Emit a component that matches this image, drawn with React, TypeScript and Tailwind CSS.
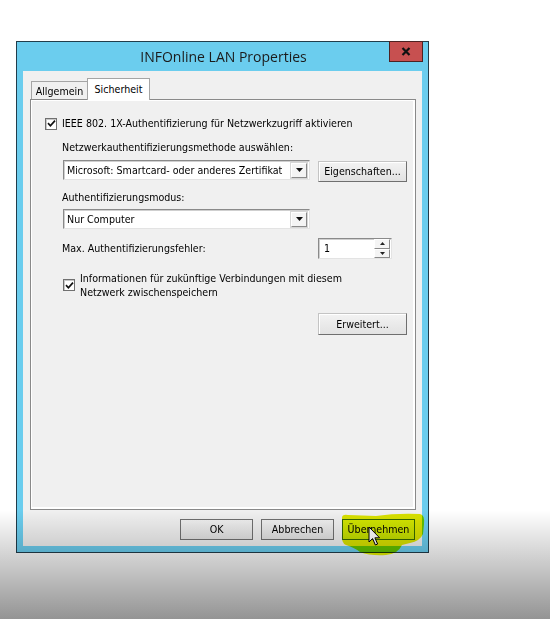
import React from 'react';

function CheckMark() {
  return (
    <svg viewBox="0 0 9 9" className="w-[9px] h-[9px]">
      <path d="M1 4.2 L3.4 6.8 L8 1.6" fill="none" stroke="#111" strokeWidth="1.7" />
    </svg>
  );
}

function CheckBox() {
  return (
    <div className="w-[12px] h-[12px] shrink-0 bg-white border border-[#707070] shadow-[inset_1px_1px_0_#c8c8c8] flex items-center justify-center">
      <CheckMark />
    </div>
  );
}

function ArrowDown({ small }: { small?: boolean }) {
  return small ? (
    <svg viewBox="0 0 5 3" className="w-[5px] h-[3px]">
      <polygon points="0,0 5,0 2.5,3" fill="#222" />
    </svg>
  ) : (
    <svg viewBox="0 0 7 4" className="w-[7px] h-[4px]">
      <polygon points="0,0 7,0 3.5,4" fill="#111" />
    </svg>
  );
}

function ArrowUp() {
  return (
    <svg viewBox="0 0 5 3" className="w-[5px] h-[3px]">
      <polygon points="0,3 5,3 2.5,0" fill="#222" />
    </svg>
  );
}

function Select({ value, width }: { value: string; width: string }) {
  return (
    <div
      className={`${width} h-[20px] bg-white border border-[#8a8a8a] border-r-[#e3e3e3] border-b-[#e3e3e3] shadow-[inset_1px_1px_0_#cfcfcf] flex items-center pl-[3px] pr-[2px]`}
    >
      <span className="flex-1 whitespace-nowrap overflow-hidden">{value}</span>
      <div className="w-[16px] h-[15px] shrink-0 bg-[#f4f4f4] border border-[#ffffff] border-r-[#8a8a8a] border-b-[#8a8a8a] shadow-[0_0_0_1px_#d6d6d6] flex items-center justify-center">
        <ArrowDown />
      </div>
    </div>
  );
}

function ClassicButton({ label, h }: { label: string; h: string }) {
  return (
    <div
      className={`w-[89px] ${h} bg-gradient-to-b from-[#f3f3f3] to-[#e2e2e2] border border-[#c4c4c4] border-r-[#6f6f6f] border-b-[#6f6f6f] shadow-[inset_1px_1px_0_#ffffff] flex items-center justify-center`}
    >
      {label}
    </div>
  );
}

function DialogButton({ label, active }: { label: string; active?: boolean }) {
  return (
    <div
      className={`w-[73px] h-[21px] border flex items-center justify-center ${
        active
          ? 'border-[#3c6e96] bg-gradient-to-b from-[#eaf5fc] to-[#d9ecf9]'
          : 'border-[#707070] bg-gradient-to-b from-[#f0f0f0] to-[#e3e3e3]'
      }`}
    >
      {label}
    </div>
  );
}

export default function App() {
  return (
    <div className="relative w-[550px] h-[619px] bg-white overflow-hidden font-['DejaVu_Sans_Condensed','Liberation_Sans',Arial,sans-serif] text-[10.6px] leading-[13px] text-black">
      <div className="pt-[41px] pl-[16px]">
        <div className="w-[413px] h-[512px] border border-[#213d4b] bg-[#6bcdee] flex flex-col px-[6px] pb-[6px]">
          {/* title bar */}
          <div className="relative h-[29px] flex items-center justify-center">
            <span className="font-['Open_Sans','Noto_Sans',sans-serif] text-[14px] leading-[18px] text-[#1b1b1b] pl-[2px]">
              INFOnline LAN Properties
            </span>
            <div className="absolute top-[-1px] right-[-1px] w-[34px] h-[21px] bg-[#c75050] border border-[#4d2222] flex items-center justify-center">
              <svg viewBox="0 0 10 9" className="w-[10px] h-[9px]">
                <path d="M1.5 1 L8.5 8 M8.5 1 L1.5 8" stroke="#111" strokeWidth="2.2" />
              </svg>
            </div>
          </div>

          {/* client area */}
          <div className="flex-1 bg-[#f0f0f0] flex flex-col">
            {/* tabs */}
            <div className="mt-[7px] h-[21px] pl-[8px] flex items-end">
              <div className="w-[57px] h-[18px] border border-[#a5a5a5] border-b-0 bg-[#f0f0f0] flex items-center justify-center pt-[1px]">
                Allgemein
              </div>
              <div className="relative z-10 -ml-px -mb-px w-[63px] h-[22px] border border-[#a5a5a5] border-b-0 bg-white flex items-start justify-center pt-[4px]">
                Sicherheit
              </div>
            </div>

            {/* tab panel */}
            <div className="ml-[7px] mr-[6px] h-[411px] border border-[#898989] bg-[#f0f0f0] shadow-[inset_1px_1px_0_#ffffff,inset_-2px_-2px_0_#ffffff] pl-[14px] pr-[8px] pt-[17px] flex flex-col">
              <div className="h-[13px] flex items-center gap-[5px]">
                <CheckBox />
                <span>IEEE 802. 1X-Authentifizierung für Netzwerkzugriff aktivieren</span>
              </div>

              <div className="pl-[17px] flex flex-col">
                <div className="mt-[11px] h-[13px]">Netzwerkauthentifizierungsmethode auswählen:</div>

                <div className="mt-[6px] flex items-start">
                  <div className="ml-px">
                    <Select value="Microsoft: Smartcard- oder anderes Zertifikat" width="w-[247px]" />
                  </div>
                  <div className="ml-[8px] mt-px">
                    <ClassicButton label="Eigenschaften..." h="h-[21px]" />
                  </div>
                </div>

                <div className="mt-[9px] h-[13px]">Authentifizierungsmodus:</div>

                <div className="mt-[5px] ml-px">
                  <Select value="Nur Computer" width="w-[247px]" />
                </div>

                <div className="mt-[9px] h-[21px] flex items-center">
                  <span className="w-[256px]">Max. Authentifizierungsfehler:</span>
                  <div className="w-[74px] h-[21px] bg-white border border-[#8a8a8a] border-r-[#e3e3e3] border-b-[#e3e3e3] shadow-[inset_1px_1px_0_#cfcfcf] flex items-center pl-[5px] pr-px">
                    <span className="flex-1">1</span>
                    <div className="w-[16px] h-[19px] flex flex-col">
                      <div className="flex-1 bg-[#f4f4f4] border border-white border-r-[#8a8a8a] border-b-[#8a8a8a] flex items-center justify-center">
                        <ArrowUp />
                      </div>
                      <div className="flex-1 bg-[#f4f4f4] border border-white border-r-[#8a8a8a] border-b-[#8a8a8a] flex items-center justify-center">
                        <ArrowDown small />
                      </div>
                    </div>
                  </div>
                </div>

                <div className="mt-[12px] ml-px flex items-center gap-[5px] leading-[14px]">
                  <CheckBox />
                  <span>
                    Informationen für zukünftige Verbindungen mit diesem
                    <br />
                    Netzwerk zwischenspeichern
                  </span>
                </div>

                <div className="mt-[14px] ml-[256px]">
                  <ClassicButton label="Erweitert..." h="h-[22px]" />
                </div>
              </div>
            </div>

            {/* dialog buttons */}
            <div className="mt-[9px] pr-[7px] flex justify-end gap-[8px]">
              <DialogButton label="OK" />
              <DialogButton label="Abbrechen" />
              <DialogButton label="Übernehmen" active />
            </div>
          </div>
        </div>
      </div>

      {/* highlighter stroke */}
      <svg
        className="absolute left-[336px] top-[510px] w-[92px] h-[52px] mix-blend-multiply pointer-events-none"
        viewBox="0 0 92 52"
      >
        <path
          d="M6 8 Q6 4 12 5 L40 6 Q60 3 84 4 Q89 5 88 14 L87 24 Q84 31 74 33 L66 35 Q62 44 50 45 Q34 46 24 42 Q19 38 10 35 Q5 33 6 24 Z"
          fill="#e6f000"
        />
      </svg>

      {/* mouse cursor */}
      <svg className="absolute left-[368px] top-[526px] w-[13px] h-[21px] pointer-events-none" viewBox="0 0 13 21">
        <path
          d="M1 1 L1 16 L4.6 12.6 L7.4 19 L9.6 18 L6.9 11.8 L11.6 11.8 Z"
          fill="#fff"
          stroke="#000"
          strokeWidth="1"
          strokeLinejoin="round"
        />
      </svg>

      {/* bottom fade of the video frame */}
      <div className="absolute inset-0 pointer-events-none bg-[linear-gradient(to_bottom,rgba(0,0,0,0)_510px,rgba(0,0,0,0.42)_619px)]" />
    </div>
  );
}
